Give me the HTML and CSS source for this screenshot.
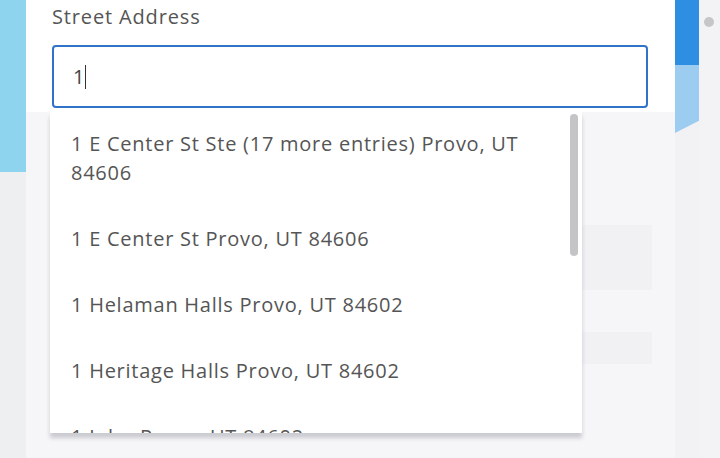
FILE: index.html
```html
<!DOCTYPE html>
<html>
<head>
<meta charset="utf-8">
<link rel="stylesheet" href="styles.css">
</head>
<body>
<div class="page">
  <div class="left-strip"><div class="left-blue"></div></div>
  <div class="card">
    <div class="card-top">
      <label class="label">Street Address</label>
      <div class="input"><span class="value">1</span><span class="caret"></span></div>
    </div>
    <div class="card-bottom">
      <div class="ghost g1"></div>
      <div class="ghost g2"></div>
    </div>
    <div class="dropdown">
      <ul class="list">
        <li class="item">1 E Center St Ste (17 more entries) Provo, UT 84606</li>
        <li class="item">1 E Center St Provo, UT 84606</li>
        <li class="item">1 Helaman Halls Provo, UT 84602</li>
        <li class="item">1 Heritage Halls Provo, UT 84602</li>
        <li class="item">1 John Provo, UT 84602</li>
      </ul>
      <div class="scrollbar"></div>
    </div>
  </div>
  <div class="right-strip">
    <div class="rb1"></div>
    <div class="rb2"></div>
  </div>
  <div class="edge"><span class="dot"></span></div>
</div>
</body>
</html>
```
FILE: styles.css
```css
* { box-sizing: border-box; }
html, body { margin: 0; padding: 0; }
body {
  width: 720px;
  height: 458px;
  overflow: hidden;
  background: #f1f1f3;
  font-family: "Open Sans", "Lato", sans-serif;
}
.page {
  display: flex;
  height: 458px;
}
.left-strip {
  width: 26px;
  background: #eeeff1;
  flex: none;
}
.left-blue {
  height: 172px;
  background: #8fd4ef;
}
.card {
  width: 649px;
  flex: none;
  position: relative;
  display: flex;
  flex-direction: column;
  background: #f5f5f7;
}
.card-top {
  background: #fff;
  padding: 3px 27px 0 26px;
  height: 112px;
}
.label {
  display: block;
  font-size: 20px;
  letter-spacing: 0.85px;
  color: #555;
  line-height: 28px;
}
.input {
  margin-top: 14px;
  width: 596px;
  height: 63px;
  border: 2px solid #2f74c8;
  border-radius: 4px;
  display: flex;
  align-items: center;
  padding-left: 19px;
  font-size: 20px;
  color: #444;
}
.caret {
  display: inline-block;
  width: 1px;
  height: 24px;
  background: #333;
  margin-left: 1px;
}
.card-bottom {
  flex: 1;
  position: relative;
  background: #f6f6f8;
}
.ghost {
  position: absolute;
  left: 556px;
  width: 70px;
  background: #f1f1f4;
}
.g1 { top: 113px; height: 65px; }
.g2 { top: 220px; height: 32px; }
.dropdown {
  position: absolute;
  left: 24px;
  top: 112px;
  width: 532px;
  height: 321px;
  background: #fff;
  box-shadow: 0 5px 4px rgba(150,150,165,0.45);
  overflow: hidden;
}
.list {
  list-style: none;
  margin: 0;
  padding: 0;
}
.item {
  font-size: 20px;
  letter-spacing: 0.75px;
  line-height: 29px;
  color: #555;
  padding: 17px 50px 20px 21px;
}
.scrollbar {
  position: absolute;
  right: 4px;
  top: 2px;
  width: 8px;
  height: 142px;
  background: #c4c4c6;
  border-radius: 4px;
}
.right-strip {
  width: 24px;
  flex: none;
  background: #f2f2f4;
}
.rb1 {
  height: 65px;
  background: #2e8fe2;
}
.rb2 {
  height: 68px;
  background: #9ccdf0;
  clip-path: polygon(0 0, 100% 0, 100% 82%, 0 100%);
}
.edge {
  flex: 1;
  background: #f3f3f5;
  position: relative;
}
.dot {
  position: absolute;
  left: 5px;
  top: 17px;
  width: 10px;
  height: 10px;
  border-radius: 50%;
  background: #c6c6c8;
}
```
